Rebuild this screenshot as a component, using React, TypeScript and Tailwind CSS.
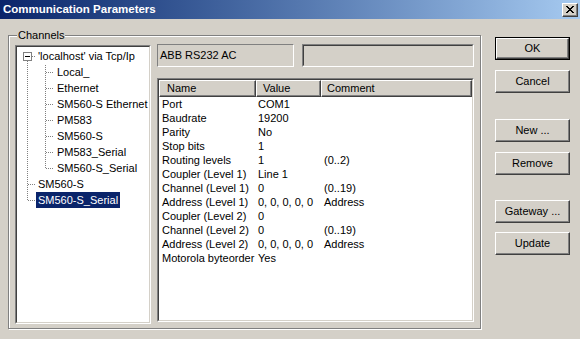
import React from 'react';

const font = { fontFamily: '"Liberation Sans", Arial, sans-serif' };

const tree = [
  { label: "'localhost' via Tcp/Ip", level: 0 },
  { label: 'Local_', level: 1 },
  { label: 'Ethernet', level: 1 },
  { label: 'SM560-S Ethernet', level: 1 },
  { label: 'PM583', level: 1 },
  { label: 'SM560-S', level: 1 },
  { label: 'PM583_Serial', level: 1 },
  { label: 'SM560-S_Serial', level: 1 },
  { label: 'SM560-S', level: 0 },
  { label: 'SM560-S_Serial', level: 0, selected: true },
];

const params = [
  ['Port', 'COM1', ''],
  ['Baudrate', '19200', ''],
  ['Parity', 'No', ''],
  ['Stop bits', '1', ''],
  ['Routing levels', '1', '(0..2)'],
  ['Coupler (Level 1)', 'Line 1', ''],
  ['Channel (Level 1)', '0', '(0..19)'],
  ['Address (Level 1)', '0, 0, 0, 0, 0', 'Address'],
  ['Coupler (Level 2)', '0', ''],
  ['Channel (Level 2)', '0', '(0..19)'],
  ['Address (Level 2)', '0, 0, 0, 0, 0', 'Address'],
  ['Motorola byteorder', 'Yes', ''],
];

const buttons = [
  { label: 'OK', mt: 'mt-0', isDefault: true },
  { label: 'Cancel', mt: 'mt-[10px]' },
  { label: 'New ...', mt: 'mt-[26px]' },
  { label: 'Remove', mt: 'mt-[10px]' },
  { label: 'Gateway ...', mt: 'mt-[25px]' },
  { label: 'Update', mt: 'mt-[9px]' },
];

function TreeLines() {
  const cy = (i: number) => 9 + 16 * i + 0.5;
  return (
    <svg
      className="absolute left-0 top-0 pointer-events-none"
      width={132}
      height={275}
      shapeRendering="crispEdges"
    >
      <g stroke="#808080" strokeDasharray="1 1" fill="none">
        <line x1={10.5} y1={14} x2={10.5} y2={cy(9)} />
        <line x1={15} y1={cy(0)} x2={19} y2={cy(0)} />
        <line x1={11} y1={cy(8)} x2={19} y2={cy(8)} />
        <line x1={11} y1={cy(9)} x2={19} y2={cy(9)} />
        <line x1={28.5} y1={18} x2={28.5} y2={cy(7)} />
        {[1, 2, 3, 4, 5, 6, 7].map((i) => (
          <line key={i} x1={29} y1={cy(i)} x2={37} y2={cy(i)} />
        ))}
      </g>
      <rect x={6.5} y={5.5} width={8} height={8} fill="#fff" stroke="#808080" />
      <line x1={8} y1={9.5} x2={13} y2={9.5} stroke="#000" />
    </svg>
  );
}

function Button({ label, mt, isDefault }: { label: string; mt: string; isDefault?: boolean }) {
  return (
    <div
      className={`${mt} w-[75px] h-[23px] ${
        isDefault ? 'border border-black' : ''
      }`}
    >
      <div className="h-full w-full border-t border-l border-white border-r border-b border-r-[#404040] border-b-[#404040] shadow-[inset_-1px_-1px_0_#808080] flex items-center justify-center text-[11px] text-black">
        {label}
      </div>
    </div>
  );
}

function HeaderCell({ label, w, pl }: { label: string; w: string; pl: string }) {
  return (
    <div
      className={`${w} ${pl} h-[17px] shrink-0 flex items-center border-t border-l border-white border-r border-b border-r-[#404040] border-b-[#404040] shadow-[inset_-1px_-1px_0_#808080] bg-[#d4d0c8]`}
    >
      {label}
    </div>
  );
}

export default function App() {
  return (
    <div className="w-[580px] h-[339px] bg-[#d4d0c8] text-[11px] text-black overflow-hidden" style={font}>
      {/* title bar */}
      <div className="h-[19px] flex items-center justify-between bg-gradient-to-r from-[#0a246a] to-[#a6caf0] pl-[3px] pr-[2px]">
        <span className="text-white font-bold text-[11.5px] leading-none">Communication Parameters</span>
        <div className="w-[16px] h-[14px] bg-[#d4d0c8] border-t border-l border-white border-r border-b border-r-[#404040] border-b-[#404040] shadow-[inset_-1px_-1px_0_#808080] flex items-center justify-center">
          <svg width="8" height="7" viewBox="0 0 8 7" shapeRendering="crispEdges">
            <path d="M0 0h2v1h-2zM6 0h2v1h-2zM1 1h2v1h-2zM5 1h2v1h-2zM2 2h4v1h-4zM3 3h2v1h-2zM2 4h4v1h-4zM1 5h2v1h-2zM5 5h2v1h-2zM0 6h2v1h-2zM6 6h2v1h-2z" fill="#000" />
          </svg>
        </div>
      </div>

      <div className="flex items-start">
        {/* Channels group */}
        <div className="relative ml-[8px] mt-[16px] w-[473px] h-[294px] border border-[#808080] shadow-[inset_1px_1px_0_#fff,1px_1px_0_#fff] flex items-start gap-[6px] pl-[6px] pt-[8px]">
          <span className="absolute left-[8px] -top-[7px] px-[1px] bg-[#d4d0c8] leading-[13px]">Channels</span>

          {/* tree */}
          <div className="mt-[1px] w-[136px] h-[279px] border border-t-[#808080] border-l-[#808080] border-r-white border-b-white">
            <div className="relative h-full w-full bg-white border border-t-[#404040] border-l-[#404040] border-r-[#d4d0c8] border-b-[#d4d0c8] pt-[1px]">
              <TreeLines />
              {tree.map((n, i) => (
                <div
                  key={i}
                  className={`relative h-[16px] flex items-center ${n.level === 0 ? 'pl-[19px]' : 'pl-[38px]'}`}
                >
                  <span
                    className={`h-[16px] px-[2px] leading-[16px] whitespace-nowrap ${
                      n.selected ? 'bg-[#0a246a] text-white' : ''
                    }`}
                  >
                    {n.label}
                  </span>
                </div>
              ))}
            </div>
          </div>

          {/* right side */}
          <div className="flex flex-col">
            <div className="flex gap-[8px]">
              <div className="w-[137px] h-[23px] border border-t-[#808080] border-l-[#808080] border-r-white border-b-white flex items-center pl-[2px]">
                ABB RS232 AC
              </div>
              <div className="w-[172px] h-[23px] border border-t-[#808080] border-l-[#808080] border-r-white border-b-white">
                <div className="h-full w-full border border-t-[#404040] border-l-[#404040] border-r-[#d4d0c8] border-b-[#d4d0c8]" />
              </div>
            </div>

            <div className="mt-[11px] w-[317px] h-[244px] border border-t-[#808080] border-l-[#808080] border-r-white border-b-white">
              <div className="h-full w-full bg-white border border-t-[#404040] border-l-[#404040] border-r-[#d4d0c8] border-b-[#d4d0c8] flex flex-col">
                <div className="flex">
                  <HeaderCell label="Name" w="w-[97px]" pl="pl-[7px]" />
                  <HeaderCell label="Value" w="w-[65px]" pl="pl-[6px]" />
                  <HeaderCell label="Comment" w="w-[151px]" pl="pl-[5px]" />
                </div>
                {params.map(([name, value, comment]) => (
                  <div key={name} className="flex h-[14px] items-center leading-[14px] whitespace-nowrap">
                    <span className="w-[97px] pl-[3px] shrink-0">{name}</span>
                    <span className="w-[65px] pl-[2px] shrink-0">{value}</span>
                    <span className="pl-[3px]">{comment}</span>
                  </div>
                ))}
              </div>
            </div>
          </div>
        </div>

        {/* buttons */}
        <div className="ml-[14px] mt-[18px] flex flex-col">
          {buttons.map((b) => (
            <Button key={b.label} label={b.label} mt={b.mt} isDefault={b.isDefault} />
          ))}
        </div>
      </div>
    </div>
  );
}
